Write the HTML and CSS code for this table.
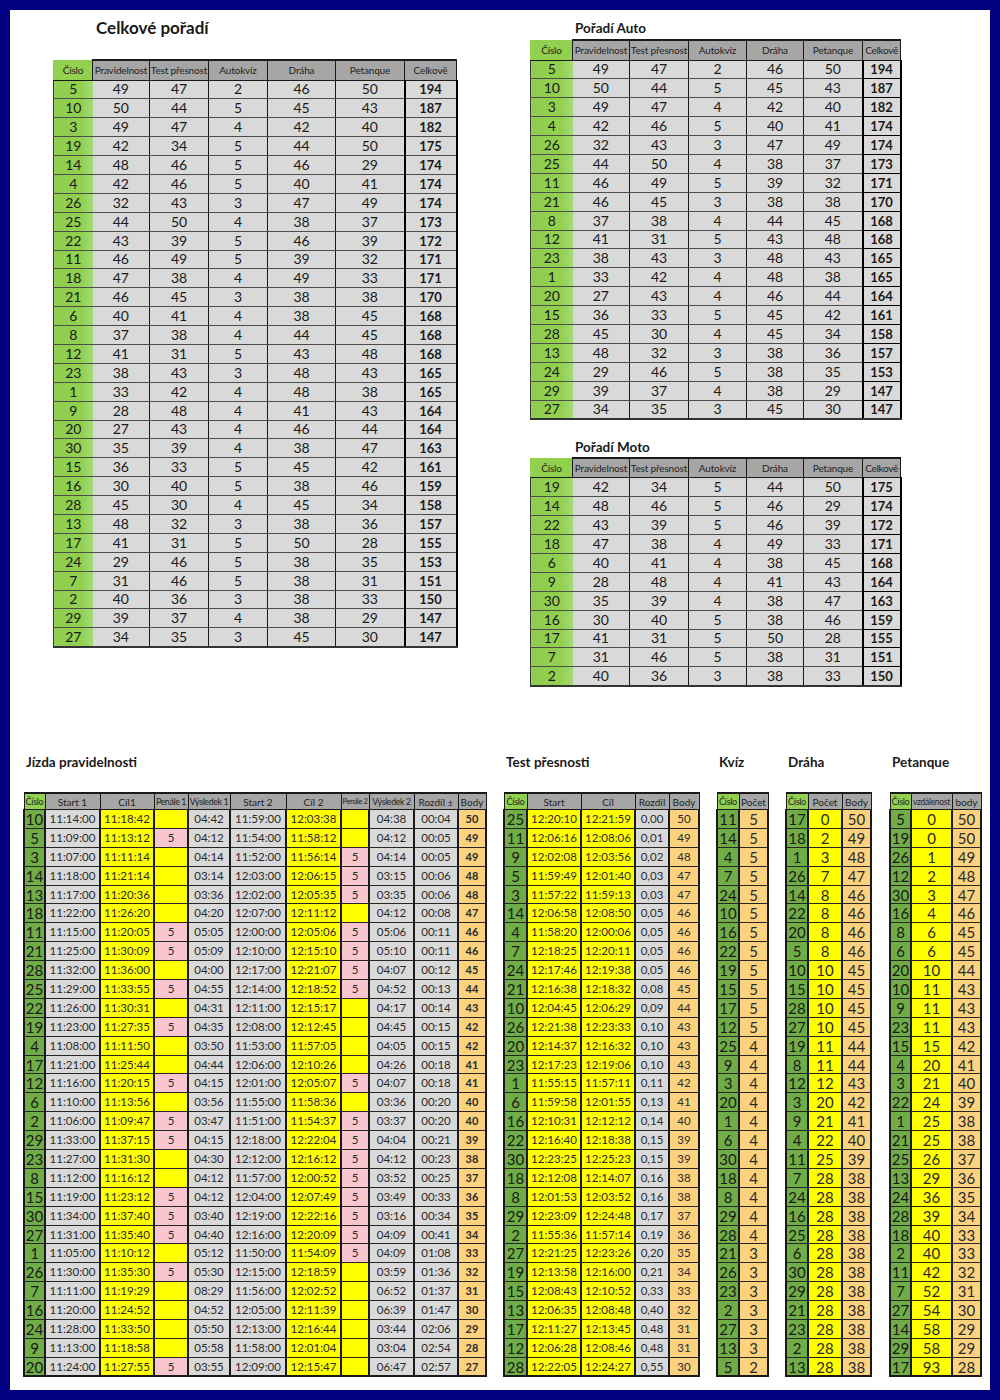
FILE: index.html
```html
<!DOCTYPE html>
<html lang="cs">
<head>
<meta charset="utf-8">
<title>Výsledky</title>
<link rel="stylesheet" href="styles.css">
</head>
<body>
<div class="sheet">
  <div class="top">
    <section class="overall">
      <h2 class="title-lg">Celkové pořadí</h2>
      <table class="sum main">
        <colgroup><col style="width:39px"><col style="width:57px"><col style="width:59px"><col style="width:59px"><col style="width:68px"><col style="width:69px"><col style="width:52px"></colgroup>
        <thead><tr><th><span>Číslo</span></th><th><span>Pravidelnost</span></th><th><span>Test přesnost</span></th><th><span>Autokvíz</span></th><th><span>Dráha</span></th><th><span>Petanque</span></th><th><span>Celkově</span></th></tr></thead>
        <tbody>
<tr><td>5</td><td>49</td><td>47</td><td>2</td><td>46</td><td>50</td><td>194</td></tr>
<tr><td>10</td><td>50</td><td>44</td><td>5</td><td>45</td><td>43</td><td>187</td></tr>
<tr><td>3</td><td>49</td><td>47</td><td>4</td><td>42</td><td>40</td><td>182</td></tr>
<tr><td>19</td><td>42</td><td>34</td><td>5</td><td>44</td><td>50</td><td>175</td></tr>
<tr><td>14</td><td>48</td><td>46</td><td>5</td><td>46</td><td>29</td><td>174</td></tr>
<tr><td>4</td><td>42</td><td>46</td><td>5</td><td>40</td><td>41</td><td>174</td></tr>
<tr><td>26</td><td>32</td><td>43</td><td>3</td><td>47</td><td>49</td><td>174</td></tr>
<tr><td>25</td><td>44</td><td>50</td><td>4</td><td>38</td><td>37</td><td>173</td></tr>
<tr><td>22</td><td>43</td><td>39</td><td>5</td><td>46</td><td>39</td><td>172</td></tr>
<tr><td>11</td><td>46</td><td>49</td><td>5</td><td>39</td><td>32</td><td>171</td></tr>
<tr><td>18</td><td>47</td><td>38</td><td>4</td><td>49</td><td>33</td><td>171</td></tr>
<tr><td>21</td><td>46</td><td>45</td><td>3</td><td>38</td><td>38</td><td>170</td></tr>
<tr><td>6</td><td>40</td><td>41</td><td>4</td><td>38</td><td>45</td><td>168</td></tr>
<tr><td>8</td><td>37</td><td>38</td><td>4</td><td>44</td><td>45</td><td>168</td></tr>
<tr><td>12</td><td>41</td><td>31</td><td>5</td><td>43</td><td>48</td><td>168</td></tr>
<tr><td>23</td><td>38</td><td>43</td><td>3</td><td>48</td><td>43</td><td>165</td></tr>
<tr><td>1</td><td>33</td><td>42</td><td>4</td><td>48</td><td>38</td><td>165</td></tr>
<tr><td>9</td><td>28</td><td>48</td><td>4</td><td>41</td><td>43</td><td>164</td></tr>
<tr><td>20</td><td>27</td><td>43</td><td>4</td><td>46</td><td>44</td><td>164</td></tr>
<tr><td>30</td><td>35</td><td>39</td><td>4</td><td>38</td><td>47</td><td>163</td></tr>
<tr><td>15</td><td>36</td><td>33</td><td>5</td><td>45</td><td>42</td><td>161</td></tr>
<tr><td>16</td><td>30</td><td>40</td><td>5</td><td>38</td><td>46</td><td>159</td></tr>
<tr><td>28</td><td>45</td><td>30</td><td>4</td><td>45</td><td>34</td><td>158</td></tr>
<tr><td>13</td><td>48</td><td>32</td><td>3</td><td>38</td><td>36</td><td>157</td></tr>
<tr><td>17</td><td>41</td><td>31</td><td>5</td><td>50</td><td>28</td><td>155</td></tr>
<tr><td>24</td><td>29</td><td>46</td><td>5</td><td>38</td><td>35</td><td>153</td></tr>
<tr><td>7</td><td>31</td><td>46</td><td>5</td><td>38</td><td>31</td><td>151</td></tr>
<tr><td>2</td><td>40</td><td>36</td><td>3</td><td>38</td><td>33</td><td>150</td></tr>
<tr><td>29</td><td>39</td><td>37</td><td>4</td><td>38</td><td>29</td><td>147</td></tr>
<tr><td>27</td><td>34</td><td>35</td><td>3</td><td>45</td><td>30</td><td>147</td></tr>
        </tbody>
      </table>
    </section>
    <div class="right">
      <section class="auto">
        <h2 class="title-md">Pořadí Auto</h2>
        <table class="sum cat">
          <colgroup><col style="width:42px"><col style="width:57px"><col style="width:59px"><col style="width:58px"><col style="width:57px"><col style="width:59px"><col style="width:38px"></colgroup>
          <thead><tr><th><span>Číslo</span></th><th><span>Pravidelnost</span></th><th><span>Test přesnost</span></th><th><span>Autokvíz</span></th><th><span>Dráha</span></th><th><span>Petanque</span></th><th><span>Celkově</span></th></tr></thead>
          <tbody>
<tr><td>5</td><td>49</td><td>47</td><td>2</td><td>46</td><td>50</td><td>194</td></tr>
<tr><td>10</td><td>50</td><td>44</td><td>5</td><td>45</td><td>43</td><td>187</td></tr>
<tr><td>3</td><td>49</td><td>47</td><td>4</td><td>42</td><td>40</td><td>182</td></tr>
<tr><td>4</td><td>42</td><td>46</td><td>5</td><td>40</td><td>41</td><td>174</td></tr>
<tr><td>26</td><td>32</td><td>43</td><td>3</td><td>47</td><td>49</td><td>174</td></tr>
<tr><td>25</td><td>44</td><td>50</td><td>4</td><td>38</td><td>37</td><td>173</td></tr>
<tr><td>11</td><td>46</td><td>49</td><td>5</td><td>39</td><td>32</td><td>171</td></tr>
<tr><td>21</td><td>46</td><td>45</td><td>3</td><td>38</td><td>38</td><td>170</td></tr>
<tr><td>8</td><td>37</td><td>38</td><td>4</td><td>44</td><td>45</td><td>168</td></tr>
<tr><td>12</td><td>41</td><td>31</td><td>5</td><td>43</td><td>48</td><td>168</td></tr>
<tr><td>23</td><td>38</td><td>43</td><td>3</td><td>48</td><td>43</td><td>165</td></tr>
<tr><td>1</td><td>33</td><td>42</td><td>4</td><td>48</td><td>38</td><td>165</td></tr>
<tr><td>20</td><td>27</td><td>43</td><td>4</td><td>46</td><td>44</td><td>164</td></tr>
<tr><td>15</td><td>36</td><td>33</td><td>5</td><td>45</td><td>42</td><td>161</td></tr>
<tr><td>28</td><td>45</td><td>30</td><td>4</td><td>45</td><td>34</td><td>158</td></tr>
<tr><td>13</td><td>48</td><td>32</td><td>3</td><td>38</td><td>36</td><td>157</td></tr>
<tr><td>24</td><td>29</td><td>46</td><td>5</td><td>38</td><td>35</td><td>153</td></tr>
<tr><td>29</td><td>39</td><td>37</td><td>4</td><td>38</td><td>29</td><td>147</td></tr>
<tr><td>27</td><td>34</td><td>35</td><td>3</td><td>45</td><td>30</td><td>147</td></tr>
          </tbody>
        </table>
      </section>
      <section class="moto">
        <h2 class="title-md">Pořadí Moto</h2>
        <table class="sum cat">
          <colgroup><col style="width:42px"><col style="width:57px"><col style="width:59px"><col style="width:58px"><col style="width:57px"><col style="width:59px"><col style="width:38px"></colgroup>
          <thead><tr><th><span>Číslo</span></th><th><span>Pravidelnost</span></th><th><span>Test přesnost</span></th><th><span>Autokvíz</span></th><th><span>Dráha</span></th><th><span>Petanque</span></th><th><span>Celkově</span></th></tr></thead>
          <tbody>
<tr><td>19</td><td>42</td><td>34</td><td>5</td><td>44</td><td>50</td><td>175</td></tr>
<tr><td>14</td><td>48</td><td>46</td><td>5</td><td>46</td><td>29</td><td>174</td></tr>
<tr><td>22</td><td>43</td><td>39</td><td>5</td><td>46</td><td>39</td><td>172</td></tr>
<tr><td>18</td><td>47</td><td>38</td><td>4</td><td>49</td><td>33</td><td>171</td></tr>
<tr><td>6</td><td>40</td><td>41</td><td>4</td><td>38</td><td>45</td><td>168</td></tr>
<tr><td>9</td><td>28</td><td>48</td><td>4</td><td>41</td><td>43</td><td>164</td></tr>
<tr><td>30</td><td>35</td><td>39</td><td>4</td><td>38</td><td>47</td><td>163</td></tr>
<tr><td>16</td><td>30</td><td>40</td><td>5</td><td>38</td><td>46</td><td>159</td></tr>
<tr><td>17</td><td>41</td><td>31</td><td>5</td><td>50</td><td>28</td><td>155</td></tr>
<tr><td>7</td><td>31</td><td>46</td><td>5</td><td>38</td><td>31</td><td>151</td></tr>
<tr><td>2</td><td>40</td><td>36</td><td>3</td><td>38</td><td>33</td><td>150</td></tr>
          </tbody>
        </table>
      </section>
    </div>
  </div>

  <div class="bottom">
    <section class="jizda-block">
      <h3 class="title-sm">Jízda pravidelnosti</h3>
      <table class="bt jizda">
        <colgroup><col style="width:21px"><col style="width:55px"><col style="width:54px"><col style="width:34px"><col style="width:42px"><col style="width:56px"><col style="width:55px"><col style="width:28px"><col style="width:45px"><col style="width:44px"><col style="width:28px"></colgroup>
        <thead><tr><th><span>Číslo</span></th><th><span>Start 1</span></th><th><span>Cíl1</span></th><th><span>Penále 1</span></th><th><span>Výsledek 1</span></th><th><span>Start 2</span></th><th><span>Cíl 2</span></th><th><span>Penále 2</span></th><th><span>Výsledek 2</span></th><th><span>Rozdíl ±</span></th><th><span>Body</span></th></tr></thead>
        <tbody>
<tr><td>10</td><td>11:14:00</td><td>11:18:42</td><td></td><td>04:42</td><td>11:59:00</td><td>12:03:38</td><td></td><td>04:38</td><td>00:04</td><td>50</td></tr>
<tr><td>5</td><td>11:09:00</td><td>11:13:12</td><td class="p">5</td><td>04:12</td><td>11:54:00</td><td>11:58:12</td><td></td><td>04:12</td><td>00:05</td><td>49</td></tr>
<tr><td>3</td><td>11:07:00</td><td>11:11:14</td><td></td><td>04:14</td><td>11:52:00</td><td>11:56:14</td><td class="p">5</td><td>04:14</td><td>00:05</td><td>49</td></tr>
<tr><td>14</td><td>11:18:00</td><td>11:21:14</td><td></td><td>03:14</td><td>12:03:00</td><td>12:06:15</td><td class="p">5</td><td>03:15</td><td>00:06</td><td>48</td></tr>
<tr><td>13</td><td>11:17:00</td><td>11:20:36</td><td></td><td>03:36</td><td>12:02:00</td><td>12:05:35</td><td class="p">5</td><td>03:35</td><td>00:06</td><td>48</td></tr>
<tr><td>18</td><td>11:22:00</td><td>11:26:20</td><td></td><td>04:20</td><td>12:07:00</td><td>12:11:12</td><td></td><td>04:12</td><td>00:08</td><td>47</td></tr>
<tr><td>11</td><td>11:15:00</td><td>11:20:05</td><td class="p">5</td><td>05:05</td><td>12:00:00</td><td>12:05:06</td><td class="p">5</td><td>05:06</td><td>00:11</td><td>46</td></tr>
<tr><td>21</td><td>11:25:00</td><td>11:30:09</td><td class="p">5</td><td>05:09</td><td>12:10:00</td><td>12:15:10</td><td class="p">5</td><td>05:10</td><td>00:11</td><td>46</td></tr>
<tr><td>28</td><td>11:32:00</td><td>11:36:00</td><td></td><td>04:00</td><td>12:17:00</td><td>12:21:07</td><td class="p">5</td><td>04:07</td><td>00:12</td><td>45</td></tr>
<tr><td>25</td><td>11:29:00</td><td>11:33:55</td><td class="p">5</td><td>04:55</td><td>12:14:00</td><td>12:18:52</td><td class="p">5</td><td>04:52</td><td>00:13</td><td>44</td></tr>
<tr><td>22</td><td>11:26:00</td><td>11:30:31</td><td></td><td>04:31</td><td>12:11:00</td><td>12:15:17</td><td></td><td>04:17</td><td>00:14</td><td>43</td></tr>
<tr><td>19</td><td>11:23:00</td><td>11:27:35</td><td class="p">5</td><td>04:35</td><td>12:08:00</td><td>12:12:45</td><td></td><td>04:45</td><td>00:15</td><td>42</td></tr>
<tr><td>4</td><td>11:08:00</td><td>11:11:50</td><td></td><td>03:50</td><td>11:53:00</td><td>11:57:05</td><td></td><td>04:05</td><td>00:15</td><td>42</td></tr>
<tr><td>17</td><td>11:21:00</td><td>11:25:44</td><td></td><td>04:44</td><td>12:06:00</td><td>12:10:26</td><td></td><td>04:26</td><td>00:18</td><td>41</td></tr>
<tr><td>12</td><td>11:16:00</td><td>11:20:15</td><td class="p">5</td><td>04:15</td><td>12:01:00</td><td>12:05:07</td><td class="p">5</td><td>04:07</td><td>00:18</td><td>41</td></tr>
<tr><td>6</td><td>11:10:00</td><td>11:13:56</td><td></td><td>03:56</td><td>11:55:00</td><td>11:58:36</td><td></td><td>03:36</td><td>00:20</td><td>40</td></tr>
<tr><td>2</td><td>11:06:00</td><td>11:09:47</td><td class="p">5</td><td>03:47</td><td>11:51:00</td><td>11:54:37</td><td class="p">5</td><td>03:37</td><td>00:20</td><td>40</td></tr>
<tr><td>29</td><td>11:33:00</td><td>11:37:15</td><td class="p">5</td><td>04:15</td><td>12:18:00</td><td>12:22:04</td><td class="p">5</td><td>04:04</td><td>00:21</td><td>39</td></tr>
<tr><td>23</td><td>11:27:00</td><td>11:31:30</td><td></td><td>04:30</td><td>12:12:00</td><td>12:16:12</td><td class="p">5</td><td>04:12</td><td>00:23</td><td>38</td></tr>
<tr><td>8</td><td>11:12:00</td><td>11:16:12</td><td></td><td>04:12</td><td>11:57:00</td><td>12:00:52</td><td class="p">5</td><td>03:52</td><td>00:25</td><td>37</td></tr>
<tr><td>15</td><td>11:19:00</td><td>11:23:12</td><td class="p">5</td><td>04:12</td><td>12:04:00</td><td>12:07:49</td><td class="p">5</td><td>03:49</td><td>00:33</td><td>36</td></tr>
<tr><td>30</td><td>11:34:00</td><td>11:37:40</td><td class="p">5</td><td>03:40</td><td>12:19:00</td><td>12:22:16</td><td class="p">5</td><td>03:16</td><td>00:34</td><td>35</td></tr>
<tr><td>27</td><td>11:31:00</td><td>11:35:40</td><td class="p">5</td><td>04:40</td><td>12:16:00</td><td>12:20:09</td><td class="p">5</td><td>04:09</td><td>00:41</td><td>34</td></tr>
<tr><td>1</td><td>11:05:00</td><td>11:10:12</td><td></td><td>05:12</td><td>11:50:00</td><td>11:54:09</td><td class="p">5</td><td>04:09</td><td>01:08</td><td>33</td></tr>
<tr><td>26</td><td>11:30:00</td><td>11:35:30</td><td class="p">5</td><td>05:30</td><td>12:15:00</td><td>12:18:59</td><td></td><td>03:59</td><td>01:36</td><td>32</td></tr>
<tr><td>7</td><td>11:11:00</td><td>11:19:29</td><td></td><td>08:29</td><td>11:56:00</td><td>12:02:52</td><td></td><td>06:52</td><td>01:37</td><td>31</td></tr>
<tr><td>16</td><td>11:20:00</td><td>11:24:52</td><td></td><td>04:52</td><td>12:05:00</td><td>12:11:39</td><td></td><td>06:39</td><td>01:47</td><td>30</td></tr>
<tr><td>24</td><td>11:28:00</td><td>11:33:50</td><td></td><td>05:50</td><td>12:13:00</td><td>12:16:44</td><td></td><td>03:44</td><td>02:06</td><td>29</td></tr>
<tr><td>9</td><td>11:13:00</td><td>11:18:58</td><td></td><td>05:58</td><td>11:58:00</td><td>12:01:04</td><td></td><td>03:04</td><td>02:54</td><td>28</td></tr>
<tr><td>20</td><td>11:24:00</td><td>11:27:55</td><td class="p">5</td><td>03:55</td><td>12:09:00</td><td>12:15:47</td><td></td><td>06:47</td><td>02:57</td><td>27</td></tr>
        </tbody>
      </table>
    </section>

    <section class="test-block">
      <h3 class="title-sm">Test přesnosti</h3>
      <table class="bt test">
        <colgroup><col style="width:23px"><col style="width:54px"><col style="width:54px"><col style="width:34px"><col style="width:30px"></colgroup>
        <thead><tr><th><span>Číslo</span></th><th><span>Start</span></th><th><span>Cíl</span></th><th><span>Rozdíl</span></th><th><span>Body</span></th></tr></thead>
        <tbody>
<tr><td>25</td><td>12:20:10</td><td>12:21:59</td><td>0,00</td><td>50</td></tr>
<tr><td>11</td><td>12:06:16</td><td>12:08:06</td><td>0,01</td><td>49</td></tr>
<tr><td>9</td><td>12:02:08</td><td>12:03:56</td><td>0,02</td><td>48</td></tr>
<tr><td>5</td><td>11:59:49</td><td>12:01:40</td><td>0,03</td><td>47</td></tr>
<tr><td>3</td><td>11:57:22</td><td>11:59:13</td><td>0,03</td><td>47</td></tr>
<tr><td>14</td><td>12:06:58</td><td>12:08:50</td><td>0,05</td><td>46</td></tr>
<tr><td>4</td><td>11:58:20</td><td>12:00:06</td><td>0,05</td><td>46</td></tr>
<tr><td>7</td><td>12:18:25</td><td>12:20:11</td><td>0,05</td><td>46</td></tr>
<tr><td>24</td><td>12:17:46</td><td>12:19:38</td><td>0,05</td><td>46</td></tr>
<tr><td>21</td><td>12:16:38</td><td>12:18:32</td><td>0,08</td><td>45</td></tr>
<tr><td>10</td><td>12:04:45</td><td>12:06:29</td><td>0,09</td><td>44</td></tr>
<tr><td>26</td><td>12:21:38</td><td>12:23:33</td><td>0,10</td><td>43</td></tr>
<tr><td>20</td><td>12:14:37</td><td>12:16:32</td><td>0,10</td><td>43</td></tr>
<tr><td>23</td><td>12:17:23</td><td>12:19:06</td><td>0,10</td><td>43</td></tr>
<tr><td>1</td><td>11:55:15</td><td>11:57:11</td><td>0,11</td><td>42</td></tr>
<tr><td>6</td><td>11:59:58</td><td>12:01:55</td><td>0,13</td><td>41</td></tr>
<tr><td>16</td><td>12:10:31</td><td>12:12:12</td><td>0,14</td><td>40</td></tr>
<tr><td>22</td><td>12:16:40</td><td>12:18:38</td><td>0,15</td><td>39</td></tr>
<tr><td>30</td><td>12:23:25</td><td>12:25:23</td><td>0,15</td><td>39</td></tr>
<tr><td>18</td><td>12:12:08</td><td>12:14:07</td><td>0,16</td><td>38</td></tr>
<tr><td>8</td><td>12:01:53</td><td>12:03:52</td><td>0,16</td><td>38</td></tr>
<tr><td>29</td><td>12:23:09</td><td>12:24:48</td><td>0,17</td><td>37</td></tr>
<tr><td>2</td><td>11:55:36</td><td>11:57:14</td><td>0,19</td><td>36</td></tr>
<tr><td>27</td><td>12:21:25</td><td>12:23:26</td><td>0,20</td><td>35</td></tr>
<tr><td>19</td><td>12:13:58</td><td>12:16:00</td><td>0,21</td><td>34</td></tr>
<tr><td>15</td><td>12:08:43</td><td>12:10:52</td><td>0,33</td><td>33</td></tr>
<tr><td>13</td><td>12:06:35</td><td>12:08:48</td><td>0,40</td><td>32</td></tr>
<tr><td>17</td><td>12:11:27</td><td>12:13:45</td><td>0,48</td><td>31</td></tr>
<tr><td>12</td><td>12:06:28</td><td>12:08:46</td><td>0,48</td><td>31</td></tr>
<tr><td>28</td><td>12:22:05</td><td>12:24:27</td><td>0,55</td><td>30</td></tr>
        </tbody>
      </table>
    </section>

    <section class="kviz-block">
      <h3 class="title-sm">Kvíz</h3>
      <table class="bt kviz">
        <colgroup><col style="width:22px"><col style="width:29px"></colgroup>
        <thead><tr><th><span>Číslo</span></th><th><span>Počet</span></th></tr></thead>
        <tbody>
<tr><td>11</td><td>5</td></tr>
<tr><td>14</td><td>5</td></tr>
<tr><td>4</td><td>5</td></tr>
<tr><td>7</td><td>5</td></tr>
<tr><td>24</td><td>5</td></tr>
<tr><td>10</td><td>5</td></tr>
<tr><td>16</td><td>5</td></tr>
<tr><td>22</td><td>5</td></tr>
<tr><td>19</td><td>5</td></tr>
<tr><td>15</td><td>5</td></tr>
<tr><td>17</td><td>5</td></tr>
<tr><td>12</td><td>5</td></tr>
<tr><td>25</td><td>4</td></tr>
<tr><td>9</td><td>4</td></tr>
<tr><td>3</td><td>4</td></tr>
<tr><td>20</td><td>4</td></tr>
<tr><td>1</td><td>4</td></tr>
<tr><td>6</td><td>4</td></tr>
<tr><td>30</td><td>4</td></tr>
<tr><td>18</td><td>4</td></tr>
<tr><td>8</td><td>4</td></tr>
<tr><td>29</td><td>4</td></tr>
<tr><td>28</td><td>4</td></tr>
<tr><td>21</td><td>3</td></tr>
<tr><td>26</td><td>3</td></tr>
<tr><td>23</td><td>3</td></tr>
<tr><td>2</td><td>3</td></tr>
<tr><td>27</td><td>3</td></tr>
<tr><td>13</td><td>3</td></tr>
<tr><td>5</td><td>2</td></tr>
        </tbody>
      </table>
    </section>

    <section class="draha-block">
      <h3 class="title-sm">Dráha</h3>
      <table class="bt draha">
        <colgroup><col style="width:22px"><col style="width:34px"><col style="width:29px"></colgroup>
        <thead><tr><th><span>Číslo</span></th><th><span>Počet</span></th><th><span>Body</span></th></tr></thead>
        <tbody>
<tr><td>17</td><td>0</td><td>50</td></tr>
<tr><td>18</td><td>2</td><td>49</td></tr>
<tr><td>1</td><td>3</td><td>48</td></tr>
<tr><td>26</td><td>7</td><td>47</td></tr>
<tr><td>14</td><td>8</td><td>46</td></tr>
<tr><td>22</td><td>8</td><td>46</td></tr>
<tr><td>20</td><td>8</td><td>46</td></tr>
<tr><td>5</td><td>8</td><td>46</td></tr>
<tr><td>10</td><td>10</td><td>45</td></tr>
<tr><td>15</td><td>10</td><td>45</td></tr>
<tr><td>28</td><td>10</td><td>45</td></tr>
<tr><td>27</td><td>10</td><td>45</td></tr>
<tr><td>19</td><td>11</td><td>44</td></tr>
<tr><td>8</td><td>11</td><td>44</td></tr>
<tr><td>12</td><td>12</td><td>43</td></tr>
<tr><td>3</td><td>20</td><td>42</td></tr>
<tr><td>9</td><td>21</td><td>41</td></tr>
<tr><td>4</td><td>22</td><td>40</td></tr>
<tr><td>11</td><td>25</td><td>39</td></tr>
<tr><td>7</td><td>28</td><td>38</td></tr>
<tr><td>24</td><td>28</td><td>38</td></tr>
<tr><td>16</td><td>28</td><td>38</td></tr>
<tr><td>25</td><td>28</td><td>38</td></tr>
<tr><td>6</td><td>28</td><td>38</td></tr>
<tr><td>30</td><td>28</td><td>38</td></tr>
<tr><td>29</td><td>28</td><td>38</td></tr>
<tr><td>21</td><td>28</td><td>38</td></tr>
<tr><td>23</td><td>28</td><td>38</td></tr>
<tr><td>2</td><td>28</td><td>38</td></tr>
<tr><td>13</td><td>28</td><td>38</td></tr>
        </tbody>
      </table>
    </section>

    <section class="pet-block">
      <h3 class="title-sm">Petanque</h3>
      <table class="bt pet">
        <colgroup><col style="width:21px"><col style="width:41px"><col style="width:29px"></colgroup>
        <thead><tr><th><span>Číslo</span></th><th><span>vzdálenost</span></th><th><span>body</span></th></tr></thead>
        <tbody>
<tr><td>5</td><td>0</td><td>50</td></tr>
<tr><td>19</td><td>0</td><td>50</td></tr>
<tr><td>26</td><td>1</td><td>49</td></tr>
<tr><td>12</td><td>2</td><td>48</td></tr>
<tr><td>30</td><td>3</td><td>47</td></tr>
<tr><td>16</td><td>4</td><td>46</td></tr>
<tr><td>8</td><td>6</td><td>45</td></tr>
<tr><td>6</td><td>6</td><td>45</td></tr>
<tr><td>20</td><td>10</td><td>44</td></tr>
<tr><td>10</td><td>11</td><td>43</td></tr>
<tr><td>9</td><td>11</td><td>43</td></tr>
<tr><td>23</td><td>11</td><td>43</td></tr>
<tr><td>15</td><td>15</td><td>42</td></tr>
<tr><td>4</td><td>20</td><td>41</td></tr>
<tr><td>3</td><td>21</td><td>40</td></tr>
<tr><td>22</td><td>24</td><td>39</td></tr>
<tr><td>1</td><td>25</td><td>38</td></tr>
<tr><td>21</td><td>25</td><td>38</td></tr>
<tr><td>25</td><td>26</td><td>37</td></tr>
<tr><td>13</td><td>29</td><td>36</td></tr>
<tr><td>24</td><td>36</td><td>35</td></tr>
<tr><td>28</td><td>39</td><td>34</td></tr>
<tr><td>18</td><td>40</td><td>33</td></tr>
<tr><td>2</td><td>40</td><td>33</td></tr>
<tr><td>11</td><td>42</td><td>32</td></tr>
<tr><td>7</td><td>52</td><td>31</td></tr>
<tr><td>27</td><td>54</td><td>30</td></tr>
<tr><td>14</td><td>58</td><td>29</td></tr>
<tr><td>29</td><td>58</td><td>29</td></tr>
<tr><td>17</td><td>93</td><td>28</td></tr>
        </tbody>
      </table>
    </section>
  </div>
</div>
</body>
</html>
```

FILE: styles.css
```css
* { box-sizing: border-box; }
html, body { margin: 0; }
body {
  background: #000080;
  padding: 10px;
  font-family: Lato, "Open Sans", "Liberation Sans", sans-serif;
  color: #1a1a1a;
}
.sheet {
  width: 980px;
  height: 1380px;
  background: #fff;
}
h2, h3 { margin: 0; }

/* ---------- top area ---------- */
.top {
  display: flex;
  align-items: flex-start;
  height: 744px;
  padding-left: 43px;
}
.overall { width: 403px; }
.title-lg {
  font-size: 17px;
  font-weight: 700;
  line-height: 20px;
  margin: 8px 0 0 43px;
}
.overall table { margin-top: 21px; }
.right { margin-left: 74px; width: 370px; }
.title-md {
  font-size: 13.5px;
  font-weight: 700;
  line-height: 16px;
  margin-left: 45px;
}
.auto { margin-top: 10px; }
.auto table { margin-top: 3px; }
.moto { margin-top: 19px; }
.moto table { margin-top: 2px; }

table {
  border-collapse: collapse;
  table-layout: fixed;
}
th, td {
  padding: 0;
  text-align: center;
  white-space: nowrap;
  overflow: hidden;
}
th span {
  display: flex;
  justify-content: center;
  overflow: hidden;
  white-space: nowrap;
}
th { font-weight: 400; color: #222; }

/* summary tables */
.main { width: 403px; }
.cat { width: 370px; }
.sum th {
  height: 20px;
  font-size: 10px;
  line-height: 12px;
  letter-spacing: -0.15px;
  background: #a6a6a6;
  border: 1.5px solid #1a1a1a;
  border-top: 2px solid #1a1a1a;
}
.sum th:first-child {
  background: #92d050;
  border-top: 0;
  border-left: 1px solid #92d050;
  border-right: 0;
}
.cat th:last-child { letter-spacing: -0.3px; }
.sum td {
  height: 18.9px;
  font-size: 14px;
  line-height: 16px;
  background: #d9d9d9;
  border-top: 1px solid #4d4d4d;
  border-bottom: 1px solid #4d4d4d;
  border-left: 1.5px solid #1a1a1a;
  border-right: 1.5px solid #1a1a1a;
}
.sum td:first-child {
  background: linear-gradient(to right, #8fcd4f 0%, #92d050 70%, #a8da7c 100%);
  border-left: 1.5px solid #333;
  border-right: 0;
}
.sum td:nth-child(2) { border-left: 0; }
.sum td:last-child {
  font-weight: 700;
  font-size: 13px;
  border-left: 2px solid #000;
  border-right: 2px solid #000;
}
.cat td:last-child {
  border-top: 1.5px solid #000;
  border-bottom: 1.5px solid #000;
}
.sum tbody tr:last-child td { border-bottom: 2px solid #333; }

/* ---------- bottom area ---------- */
.bottom {
  display: flex;
  align-items: flex-start;
  gap: 16px;
  padding-left: 13px;
}
.pet-block { margin-left: 1px; }
.title-sm {
  font-size: 13.5px;
  font-weight: 700;
  line-height: 16px;
  padding-left: 3px;
}
.bt { margin-top: 22px; }
.jizda { width: 462px; }
.test { width: 195px; }
.kviz { width: 51px; }
.draha { width: 85px; }
.pet { width: 91px; }

.bt th {
  height: 16.5px;
  font-size: 10px;
  line-height: 12px;
  background: #a6a6a6;
  border: 1.5px solid #1a1a1a;
  border-top: 2px solid #1a1a1a;
}
.bt th:first-child {
  background: #92d050;
  font-size: 9px;
  letter-spacing: -0.3px;
}
.jizda th:nth-child(4),
.jizda th:nth-child(5),
.jizda th:nth-child(9) {
  font-size: 8.8px;
  letter-spacing: -0.35px;
}
.jizda th:nth-child(8) {
  font-size: 7.5px;
  letter-spacing: -0.4px;
}
.pet th:nth-child(2) {
  font-size: 8.5px;
  letter-spacing: -0.3px;
}
.bt td {
  height: 18.9px;
  font-size: 11.5px;
  line-height: 14px;
  color: #2a2a2a;
  border-top: 1px solid #262626;
  border-bottom: 1px solid #262626;
  border-left: 2px solid #1a1a1a;
  border-right: 2px solid #1a1a1a;
}
.bt td:first-child {
  background: #70ad47;
  font-size: 15px;
  color: #1a1a1a;
}
.bt tbody tr:last-child td { border-bottom: 2px solid #1a1a1a; }

/* Jízda pravidelnosti */
.jizda td:nth-child(2),
.jizda td:nth-child(5),
.jizda td:nth-child(6),
.jizda td:nth-child(9),
.jizda td:nth-child(10) { background: #d9d9d9; }
.jizda td:nth-child(3),
.jizda td:nth-child(4),
.jizda td:nth-child(7),
.jizda td:nth-child(8) { background: #ffff00; }
.jizda td.p { background: #f8c6cf; }
.jizda td:nth-child(11) {
  background: #fcd27e;
  font-weight: 700;
  font-size: 11px;
}

/* Test přesnosti */
.test td:nth-child(2),
.test td:nth-child(3) { background: #ffff00; }
.test td:nth-child(4) { background: #d9d9d9; }
.test td:nth-child(5) { background: #fcd27e; }

/* Kvíz / Dráha / Petanque */
.kviz td, .draha td, .pet td { font-size: 15px; }
.kviz td:nth-child(2) { background: #fcd27e; }
.draha td:nth-child(2),
.pet td:nth-child(2) { background: #ffff00; }
.draha td:nth-child(3),
.pet td:nth-child(3) { background: #fcd27e; }
```
